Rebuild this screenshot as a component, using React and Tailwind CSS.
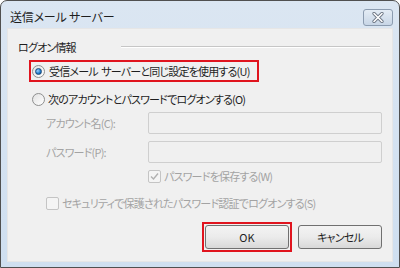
import React from "react";

const jp = { fontFamily: '"Meiryo UI", "Noto Sans CJK JP", "Noto Sans", sans-serif' };

function Radio({ checked }) {
  return (
    <span className="flex h-[13px] w-[13px] shrink-0 items-center justify-center rounded-full border border-[#8e8f8f] bg-gradient-to-br from-[#e2e2e2] to-[#ffffff]">
      {checked && (
        <span className="h-[7px] w-[7px] rounded-full border border-[#1c4a7a] bg-[radial-gradient(circle_at_35%_35%,#9fd3ff,#1a78c8_60%,#0c3f77)]" />
      )}
    </span>
  );
}

function Check({ checked }) {
  return (
    <span className="flex h-[13px] w-[13px] shrink-0 items-center justify-center rounded-[2px] border border-[#c4c4c4] bg-[#f4f4f4]">
      {checked && (
        <svg width="9" height="9" viewBox="0 0 9 9">
          <path d="M1 4.5 L3.5 7 L8 1.5" fill="none" stroke="#b0b0b0" strokeWidth="1.4" />
        </svg>
      )}
    </span>
  );
}

export default function App() {
  return (
    <div
      className="flex h-[268px] w-[400px] flex-col overflow-hidden whitespace-nowrap rounded-t-[7px] border border-[#505050] bg-gradient-to-b from-[#dbe6f2] to-[#cfdff0] text-[11px] leading-[14px] tracking-[-0.8px] text-[#1e1e1e] [font-feature-settings:'palt']"
      style={jp}
    >
      {/* title bar */}
      <div className="flex h-[27px] shrink-0 items-start justify-between pl-[9px] pr-[6px]">
        <span className="pt-[9px] text-[12px] tracking-[-0.2px] text-[#1e1e1e]">送信メール サーバー</span>
        <button className="mt-[8px] flex h-[17px] w-[30px] items-center justify-center rounded-[3px] border border-[#8c9cb0] bg-gradient-to-b from-[#e4ecf5] to-[#c8d6e6]">
          <svg width="12" height="11" viewBox="0 0 12 11">
            <path d="M2 1.5 L10 9.5 M10 1.5 L2 9.5" stroke="#6a7482" strokeWidth="3.2" strokeLinecap="round" />
            <path d="M2 1.5 L10 9.5 M10 1.5 L2 9.5" stroke="#ffffff" strokeWidth="1.6" strokeLinecap="round" />
          </svg>
        </button>
      </div>

      {/* client area */}
      <div className="mx-[6px] mb-[5px] flex flex-1 flex-col border border-[#e6e6e6] bg-[#f0f0f0] pl-[10px] pr-[10px]">
        <div className="mt-[11px] flex h-[14px] items-center">
          <span className="w-[103px]">ログオン情報</span>
          <div className="mr-[2px] h-[2px] flex-1 border-t border-b border-t-[#c6c6c6] border-b-white" />
        </div>

        <div className="ml-[11px] mt-[6px] flex h-[22px] w-[230px] items-center border-2 border-[#e0141e] pl-[1px]">
          <Radio checked />
          <span className="ml-[4px]">
            受信メール<span className="tracking-[1px]"> </span>サーバーと同じ設定を使用する(U)
          </span>
        </div>

        <div className="ml-[14px] mt-[10px] flex h-[14px] items-center">
          <Radio />
          <span className="ml-[3px]">次のアカウントとパスワードでログオンする(O)</span>
        </div>

        <div className="ml-[28px] mt-[6px] flex h-[22px] items-center text-[#a3a3a3]">
          <span className="w-[102px]">アカウント名(C):</span>
          <div className="h-[22px] flex-1 rounded-[2px] border border-[#cfcfcf] bg-[#f0f0f0]" />
        </div>
        <div className="ml-[28px] mt-[7px] flex h-[22px] items-center text-[#a3a3a3]">
          <span className="w-[102px]">パスワード(P):</span>
          <div className="h-[22px] flex-1 rounded-[2px] border border-[#cfcfcf] bg-[#f0f0f0]" />
        </div>

        <div className="ml-[130px] mt-[6px] flex h-[14px] items-center text-[#a3a3a3]">
          <Check checked />
          <span className="ml-[3px]">パスワードを保存する(W)</span>
        </div>

        <div className="ml-[28px] mt-[13px] flex h-[14px] items-center text-[#a3a3a3]">
          <Check />
          <span className="ml-[3px]">セキュリティで保護されたパスワード認証でログオンする(S)</span>
        </div>

        <div className="mt-[12px] flex items-start justify-end">
          <div className="border-2 border-[#e0141e] p-[1px]">
            <button className="flex h-[24px] w-[84px] items-center justify-center rounded-[3px] border border-[#707070] bg-gradient-to-b from-[#f3f3f3] via-[#ebebeb] to-[#d8d8d8] tracking-normal text-[#1e1e1e]">
              OK
            </button>
          </div>
          <button className="ml-[6px] mt-[3px] flex h-[24px] w-[84px] items-center justify-center rounded-[3px] border border-[#707070] bg-gradient-to-b from-[#f3f3f3] via-[#ebebeb] to-[#d8d8d8] text-[#1e1e1e]">
            キャンセル
          </button>
        </div>
      </div>
    </div>
  );
}
